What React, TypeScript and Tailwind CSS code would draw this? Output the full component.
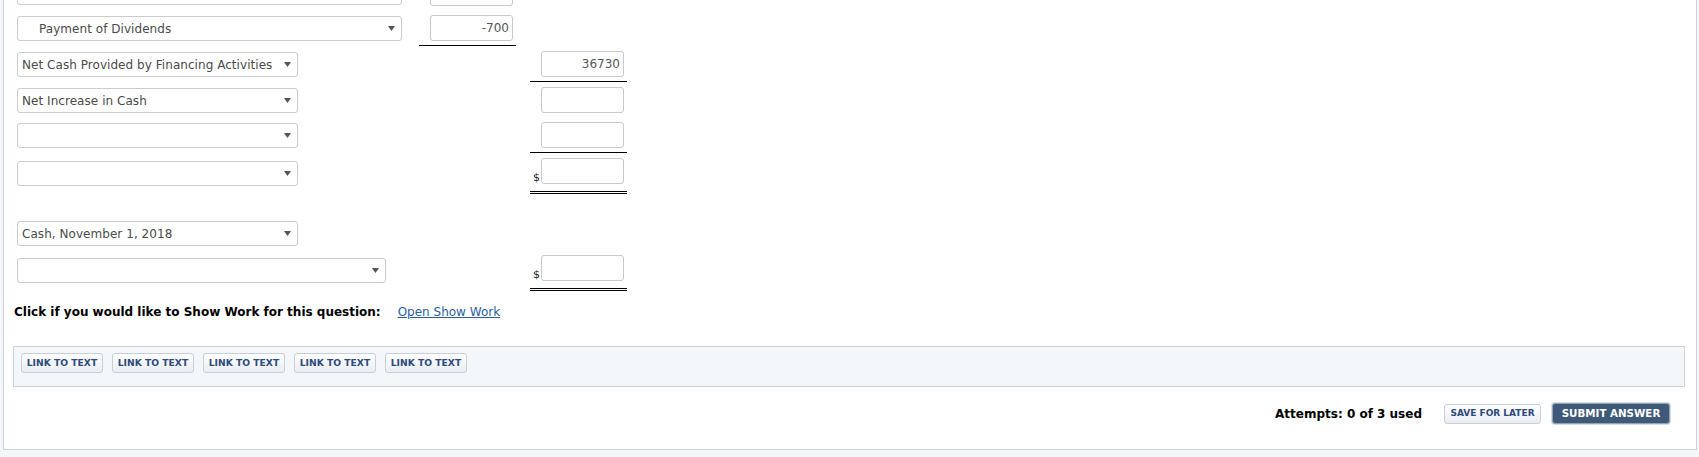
import React from 'react';

const Arrow = () => (
  <svg width="7" height="5" viewBox="0 0 7 5" className="shrink-0">
    <polygon points="0,0 7,0 3.5,5" fill="#555555" />
  </svg>
);

const Select: React.FC<{ label?: string; width: string; indent?: boolean; className?: string }> = ({
  label,
  width,
  indent,
  className = '',
}) => (
  <div
    className={`${width} ${className} h-[25px] flex items-center justify-between border border-[#cccccc] rounded-[3px] bg-white pl-[4px] pr-[6px] shrink-0`}
  >
    <span className={`text-[12px] tracking-[0.05px] text-[#4a4a4a] whitespace-nowrap ${indent ? 'pl-[17px]' : ''}`}>
      {label}
    </span>
    <Arrow />
  </div>
);

const Box: React.FC<{ value?: string }> = ({ value }) => (
  <div className="w-[83px] h-[26px] border border-[#c9c9c9] rounded-[3px] bg-white flex items-center justify-end pr-[3px] text-[12px] text-[#555555]">
    {value}
  </div>
);

export default function App() {
  return (
    <div
      className="min-h-[457px] bg-[#f4f7fa] pl-[3px] pr-[2px]"
      style={{ fontFamily: '"DejaVu Sans", Verdana, sans-serif' }}
    >
      <div className="h-[450px] bg-white border-x border-b border-[#c9d2de] pl-[9px] pr-[11px] overflow-hidden">
        {/* statement rows */}
        <div className="pl-[4px]">
          <div className="flex mt-[-20px] h-[26px]">
            <Select width="w-[385px]" />
            <div className="w-[97px] ml-[17px] flex justify-end pr-[3px]">
              <Box />
            </div>
          </div>

          <div className="flex mt-[9px]">
            <Select width="w-[385px]" label="Payment of Dividends" indent className="mt-[1px]" />
            <div className="w-[97px] ml-[17px] flex justify-end pr-[3px] pb-[4px] border-b border-black">
              <Box value="-700" />
            </div>
          </div>

          <div className="flex mt-[5px]">
            <Select width="w-[281px]" label="Net Cash Provided by Financing Activities" className="mt-[1px]" />
            <div className="w-[97px] ml-[232px] flex justify-end pr-[3px] pb-[4px] border-b border-black">
              <Box value="36730" />
            </div>
          </div>

          <div className="flex mt-[5px]">
            <Select width="w-[281px]" label="Net Increase in Cash" className="mt-[1px]" />
            <div className="w-[97px] ml-[232px] flex justify-end pr-[3px]">
              <Box />
            </div>
          </div>

          <div className="flex mt-[9px]">
            <Select width="w-[281px]" className="mt-[1px]" />
            <div className="w-[97px] ml-[232px] flex justify-end pr-[3px] pb-[4px] border-b border-black">
              <Box />
            </div>
          </div>

          <div className="flex mt-[5px]">
            <Select width="w-[281px]" className="mt-[3px]" />
            <div className="w-[97px] ml-[232px] flex items-end pl-[3px] pr-[3px] pb-[7px] border-b-[3px] border-double border-black">
              <span className="text-[11px] leading-none mb-[1px] text-[#222]">$</span>
              <div className="ml-auto">
                <Box />
              </div>
            </div>
          </div>

          <div className="flex mt-[27px]">
            <Select width="w-[281px]" label="Cash, November 1, 2018" />
          </div>

          <div className="flex mt-[9px]">
            <Select width="w-[369px]" className="mt-[3px]" />
            <div className="w-[97px] ml-[144px] flex items-end pl-[3px] pr-[3px] pb-[7px] border-b-[3px] border-double border-black">
              <span className="text-[11px] leading-none mb-[1px] text-[#222]">$</span>
              <div className="ml-auto">
                <Box />
              </div>
            </div>
          </div>
        </div>

        {/* show work */}
        <div className="flex items-center mt-[13px] h-[15px] pl-[1px]">
          <span className="text-[12px] font-bold text-black tracking-[0px]">
            Click if you would like to Show Work for this question:
          </span>
          <a href="#" className="ml-[17px] text-[12px] text-[#2a5f9e] underline">
            Open Show Work
          </a>
        </div>

        {/* link to text panel */}
        <div className="mt-[27px] h-[41px] border border-[#c9d2de] bg-[#f4f7fa] pl-[7px] pt-[6px] flex gap-[9px] items-start">
          {[1, 2, 3, 4, 5].map((i) => (
            <button
              key={i}
              className="w-[82px] h-[20px] rounded-[3px] border border-[#c6cfda] bg-gradient-to-b from-white to-[#e9edf2] text-[9.2px] font-bold text-[#2d4a7c]"
            >
              LINK TO TEXT
            </button>
          ))}
        </div>

        {/* footer */}
        <div className="flex items-center justify-end mt-[16px] pr-[15px]">
          <span className="text-[12px] font-bold text-black">Attempts: 0 of 3 used</span>
          <button className="ml-[22px] w-[97px] h-[20px] rounded-[3px] border border-[#c6cfda] bg-gradient-to-b from-white to-[#e9edf2] text-[9px] font-bold text-[#2d4a7c]">
            SAVE FOR LATER
          </button>
          <button className="ml-[11px] w-[118px] h-[21px] rounded-[3px] border border-[#93a4b7] bg-[#3e5a78] text-[10.3px] font-bold text-white shadow-[0_0_0_1px_#d5dde6]">
            SUBMIT ANSWER
          </button>
        </div>
      </div>
    </div>
  );
}
